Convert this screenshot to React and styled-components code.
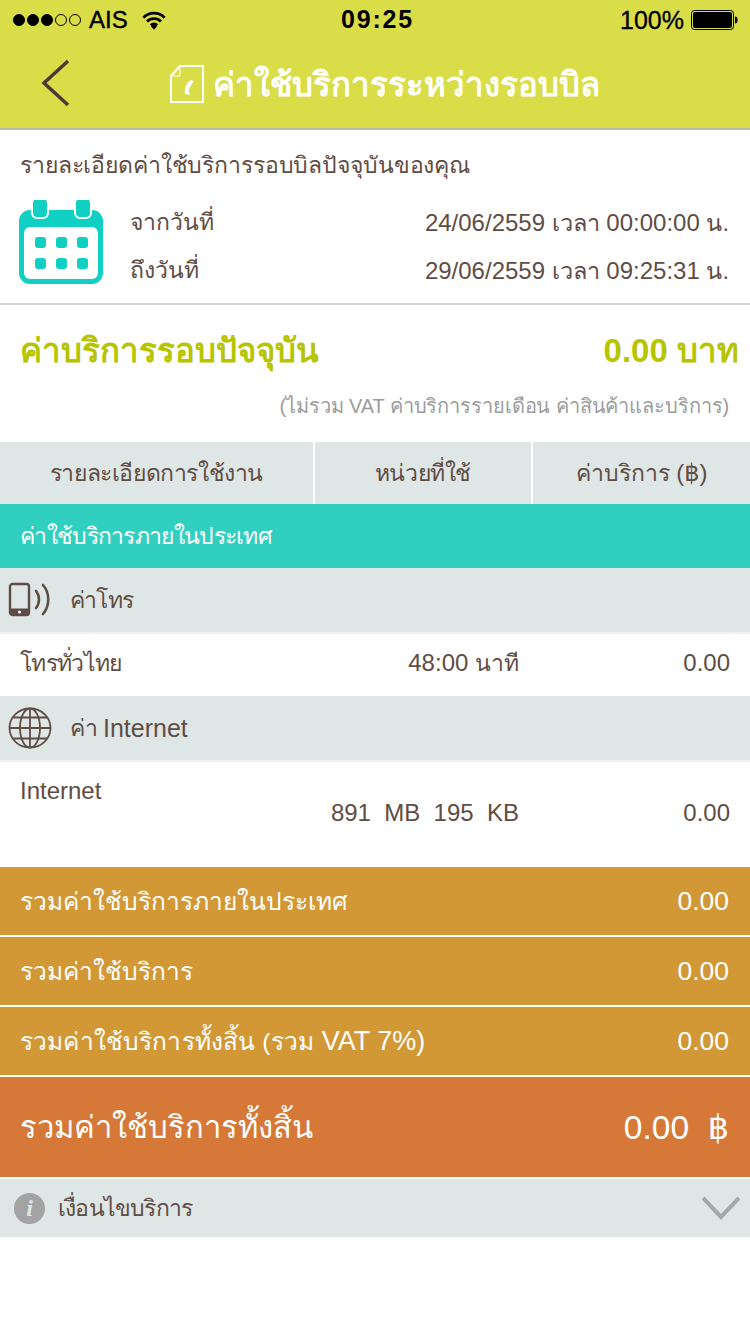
import React from "react";
import styled, { createGlobalStyle } from "styled-components";

const Global = createGlobalStyle`
  html, body { margin: 0; padding: 0; background: #fff; }
  body { font-family: "Liberation Sans", "Noto Sans", "DejaVu Sans", sans-serif; color: #5f4d45; }
`;
const Page = styled.div`width: 750px; height: 1334px; overflow: hidden; background: #fff;`;
const Th = styled.span`font-size: ${p => p.$size || 23}px; letter-spacing: ${p => p.$track || 0}px;`;
const Header = styled.header`height: 128px; background: #d9dd48; border-bottom: 2px solid #b9bca8; display: flex; flex-direction: column;`;
const StatusBar = styled.div`height: 40px; display: flex; align-items: center; padding: 0 12px 0 13px; color: #000; font-size: 25px; position: relative;`;
const Dots = styled.div`display: flex; gap: 2px; margin-right: 8px;`;
const Dot = styled.span`width: 12px; height: 12px; border-radius: 50%; box-sizing: border-box; border: 1px solid #000; background: ${p => p.$on ? "#000" : "transparent"};`;
const Carrier = styled.span`font-size: 24px; margin-right: 14px; -webkit-text-stroke: 0.4px #000;`;
const Clock = styled.span`position: absolute; left: 341px; top: 5px; font-weight: 700; font-size: 25px; letter-spacing: 1.8px;`;
const Battery = styled.div`margin-left: auto; display: flex; align-items: center; gap: 7px; -webkit-text-stroke: 0.3px #000;`;
const NavBar = styled.div`height: 88px; display: flex; align-items: center; justify-content: center; position: relative; padding-left: 20px; color: #fff;`;
const Back = styled.svg`position: absolute; left: 40px; top: 19px;`;
const NavTitle = styled.h1`margin: 0 0 0 9px; font-size: 33px; font-weight: 700; color: #fff;`;
const Info = styled.section`height: 175px; box-sizing: border-box; border-bottom: 2px solid #d2d5d5; padding: 18px 21px 0 19px;`;
const InfoTitle = styled.div`font-size: 23px; line-height: 34px; margin-left: 1px; letter-spacing: -0.12px;`;
const DateBlock = styled.div`display: flex; margin-top: 18px;`;
const DateRows = styled.div`flex: 1; margin-left: 27px; margin-top: -2px;`;
const DateRow = styled.div`display: flex; justify-content: space-between; height: 48px; align-items: center; font-size: 24px;`;
const Summary = styled.section`height: 137px; box-sizing: border-box; padding: 22px 11px 0 20px;`;
const SummaryMain = styled.div`display: flex; justify-content: space-between; align-items: center; color: #b7c400; font-size: 33px; font-weight: 700; line-height: 48px;`;
const SummaryNote = styled.div`text-align: right; font-size: 20px; line-height: 28px; color: #9c9c9c; margin-top: 17px; padding-right: 10px; letter-spacing: -0.1px;`;
const TableHead = styled.div`display: grid; grid-template-columns: 313px 218px 1fr; height: 62px; background: #dfe7e6;`;
const HeadCell = styled.div`display: flex; align-items: center; justify-content: center; font-size: 24px; border-left: ${p => p.$first ? "0" : "2px solid #fff"};`;
const Domestic = styled.div`height: 64px; background: #30cfc0; color: #fff; display: flex; align-items: center; padding-left: 20px;`;
const Category = styled.div`height: 64px; background: #dfe7e6; border-bottom: 2px solid #eef1f1; display: flex; align-items: center; font-size: 25px; padding-left: 8px;`;
const CategoryIcon = styled.span`width: 62px; display: flex;`;
const CategoryGap = styled.span`width: 5px;`;
const UsageRow = styled.div`display: grid; grid-template-columns: 300px 199px 1fr; height: ${p => p.$h}px; box-sizing: border-box; font-size: 24px; padding: 0 20px;`;
const UsageCell = styled.div`text-align: ${p => p.$right ? "right" : "left"}; margin-top: ${p => p.$top}px; line-height: 30px;`;
const TotalRow = styled.div`height: 68px; background: #d39836; color: #fff; font-size: 27px; display: flex; justify-content: space-between; align-items: center; padding: 0 21px 0 20px; border-bottom: 2px solid #fff;`;
const TotalValue = styled.span`font-size: 26.500px;`;
const GrandRow = styled.div`height: 100px; background: #d67938; color: #fff; font-size: 33.500px; display: flex; justify-content: space-between; align-items: center; padding: 0 21px 0 20px; border-bottom: 2px solid #fff;`;
const Terms = styled.div`height: 58px; background: #dfe7e6; display: flex; align-items: center; padding: 0 10px 0 14px;`;
const TermsLabel = styled.span`margin-left: 13px; flex: 1;`;
const InfoBadge = styled.span`width: 31px; height: 31px; border-radius: 50%; background: #a3a3a3; color: #dfe7e6; font: italic 700 24px "Liberation Serif", serif; display: flex; align-items: center; justify-content: center;`;

const Wifi = () => (
  <svg width="24" height="19" viewBox="0 0 26 20" fill="none" stroke="#000" strokeWidth="3">
    <path d="M1.500 7a16 16 0 0 1 23 0M5.500 11a10.500 10.500 0 0 1 15 0M9.500 15a5 5 0 0 1 7 0" />
    <path d="M13 20l-3.500-4a5 5 0 0 1 7 0z" fill="#000" stroke="none" />
  </svg>
);
const BatteryIcon = () => (
  <svg width="47" height="20" viewBox="0 0 47 20">
    <rect x=".5" y=".5" width="42" height="19" rx="3" fill="#d9dd48" stroke="#000" />
    <rect x="2" y="2" width="39" height="16" rx="2" fill="#000" />
    <path d="M44 6.500c2 0 2.500 1 2.500 3.500s-.5 3.500-2.500 3.500z" fill="#000" />
  </svg>
);
const NoteIcon = () => (
  <svg width="34" height="38" viewBox="0 0 34 38" fill="none" stroke="#fff" strokeWidth="2">
    <path d="M10 1h23v36H1V11z" />
    <path d="M10 1v10H1" strokeWidth="1" />
    <path d="M15 29c-1-6 1-11 6-14l3 1-2 3c-2 2-3 5-3 8l1 3z" fill="#fff" stroke="none" />
  </svg>
);
const Calendar = () => (
  <svg width="84" height="84" viewBox="0 0 84 84">
    <rect x="0" y="10" width="84" height="74" rx="11" fill="#0fd0c2" />
    <rect x="5" y="27" width="74" height="52" rx="6" fill="#fff" />
    <rect x="13" y="-2" width="16" height="20" rx="5" fill="#0fd0c2" stroke="#fff" strokeWidth="2" />
    <rect x="56" y="-2" width="16" height="20" rx="5" fill="#0fd0c2" stroke="#fff" strokeWidth="2" />
    {[16, 37, 58].map(x => [37, 58].map(y => <rect key={x + "-" + y} x={x} y={y} width="11" height="11" rx="3" fill="#0fd0c2" />))}
  </svg>
);
const PhoneWaves = () => (
  <svg width="46" height="36" viewBox="0 0 46 36" fill="none" stroke="#5f4d45">
    <rect x="2" y="2" width="19" height="31" rx="2.500" strokeWidth="2.400" />
    <path d="M2 27h19v4a2 2 0 0 1-2 2H4a2 2 0 0 1-2-2z" fill="#5f4d45" />
    <circle cx="11.500" cy="30" r="1.500" fill="#fff" stroke="none" />
    <path d="M28 9c4 5 4 12 0 17M35 3c7 8 7 21 0 29" strokeWidth="2.600" strokeLinecap="round" />
  </svg>
);
const Globe = () => (
  <svg width="44" height="42" viewBox="0 0 44 42" fill="none" stroke="#5f4d45" strokeWidth="1.800">
    <ellipse cx="22" cy="21" rx="20.500" ry="19.500" />
    <ellipse cx="22" cy="21" rx="10" ry="19.500" />
    <path d="M22 1.500v39M1.500 21h41M5 10.500h34M5 31.500h34" />
  </svg>
);

const App = () => (
  <Page>
    <Global />
    <Header>
      <StatusBar>
        <Dots>{[1, 1, 1, 0, 0].map((on, i) => <Dot key={i} $on={on} />)}</Dots>
        <Carrier>AIS</Carrier>
        <Wifi />
        <Clock>09:25</Clock>
        <Battery>100%<BatteryIcon /></Battery>
      </StatusBar>
      <NavBar>
        <Back width="30" height="48" viewBox="0 0 30 48" fill="none" stroke="#4a3a35" strokeWidth="3.500"><path d="M28 2L4 24l24 22" /></Back>
        <NoteIcon />
        <NavTitle>ค่าใช้บริการระหว่างรอบบิล</NavTitle>
      </NavBar>
    </Header>
    <Info>
      <InfoTitle>รายละเอียดค่าใช้บริการรอบบิลปัจจุบันของคุณ</InfoTitle>
      <DateBlock>
        <Calendar />
        <DateRows>
          <DateRow><Th>จากวันที่</Th><span>24/06/2559 <Th $size={23.5}>เวลา</Th> 00:00:00 <Th $size={23.5}>น.</Th></span></DateRow>
          <DateRow><Th>ถึงวันที่</Th><span>29/06/2559 <Th $size={23.5}>เวลา</Th> 09:25:31 <Th $size={23.5}>น.</Th></span></DateRow>
        </DateRows>
      </DateBlock>
    </Info>
    <Summary>
      <SummaryMain><span>ค่าบริการรอบปัจจุบัน</span><span>0.00 บาท</span></SummaryMain>
      <SummaryNote>(ไม่รวม VAT ค่าบริการรายเดือน ค่าสินค้าและบริการ)</SummaryNote>
    </Summary>
    <TableHead>
      <HeadCell $first><Th $track={-0.4}>รายละเอียดการใช้งาน</Th></HeadCell>
      <HeadCell><Th $track={-0.4}>หน่วยที่ใช้</Th></HeadCell>
      <HeadCell><Th>ค่าบริการ</Th>&nbsp;(฿)</HeadCell>
    </TableHead>
    <Domestic><Th $track={-0.7}>ค่าใช้บริการภายในประเทศ</Th></Domestic>
    <Category><CategoryIcon><PhoneWaves /></CategoryIcon><Th $track={-0.8}>ค่าโทร</Th></Category>
    <UsageRow $h={62}>
      <UsageCell $top={14}><Th $track={-0.7}>โทรทั่วไทย</Th></UsageCell>
      <UsageCell $right $top={14}>48:00 <Th>นาที</Th></UsageCell>
      <UsageCell $right $top={14}>0.00</UsageCell>
    </UsageRow>
    <Category><CategoryIcon><Globe /></CategoryIcon><Th>ค่า</Th><CategoryGap />Internet</Category>
    <UsageRow $h={105}>
      <UsageCell $top={14}>Internet</UsageCell>
      <UsageCell $right $top={36}>891&nbsp; MB&nbsp; 195&nbsp; KB</UsageCell>
      <UsageCell $right $top={36}>0.00</UsageCell>
    </UsageRow>
    <TotalRow><Th $size={24.5}>รวมค่าใช้บริการภายในประเทศ</Th><TotalValue>0.00</TotalValue></TotalRow>
    <TotalRow><Th $size={24.5}>รวมค่าใช้บริการ</Th><TotalValue>0.00</TotalValue></TotalRow>
    <TotalRow><span><Th $size={24.5} $track={0.15}>รวมค่าใช้บริการทั้งสิ้น (รวม</Th> VAT 7%)</span><TotalValue>0.00</TotalValue></TotalRow>
    <GrandRow><Th $size={31}>รวมค่าใช้บริการทั้งสิ้น</Th><span>0.00&nbsp; ฿</span></GrandRow>
    <Terms>
      <InfoBadge>i</InfoBadge>
      <TermsLabel><Th $track={-0.8}>เงื่อนไขบริการ</Th></TermsLabel>
      <svg width="38" height="24" viewBox="0 0 38 24" fill="none" stroke="#a3a8a8" strokeWidth="4"><path d="M1 2l18 19L37 2" /></svg>
    </Terms>
  </Page>
);
export default App;
